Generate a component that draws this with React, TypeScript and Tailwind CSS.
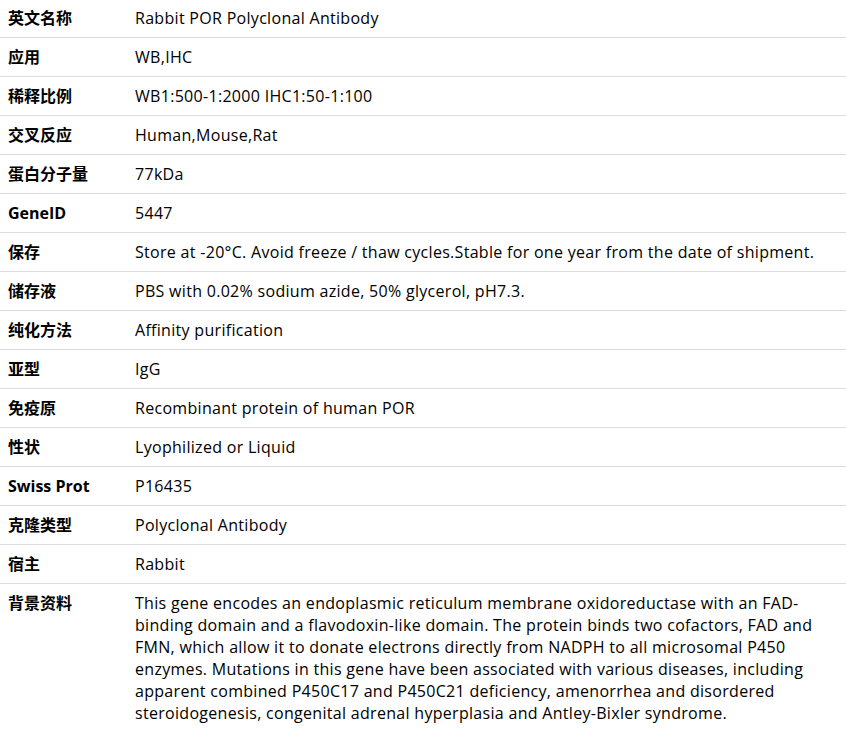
const rows: { label: string; value: string }[] = [
  { label: '英文名称', value: 'Rabbit POR Polyclonal Antibody' },
  { label: '应用', value: 'WB,IHC' },
  { label: '稀释比例', value: 'WB1:500-1:2000 IHC1:50-1:100' },
  { label: '交叉反应', value: 'Human,Mouse,Rat' },
  { label: '蛋白分子量', value: '77kDa' },
  { label: 'GeneID', value: '5447' },
  { label: '保存', value: 'Store at -20°C. Avoid freeze / thaw cycles.Stable for one year from the date of shipment.' },
  { label: '储存液', value: 'PBS with 0.02% sodium azide, 50% glycerol, pH7.3.' },
  { label: '纯化方法', value: 'Affinity purification' },
  { label: '亚型', value: 'IgG' },
  { label: '免疫原', value: 'Recombinant protein of human POR' },
  { label: '性状', value: 'Lyophilized or Liquid' },
  { label: 'Swiss Prot', value: 'P16435' },
  { label: '克隆类型', value: 'Polyclonal Antibody' },
  { label: '宿主', value: 'Rabbit' },
  {
    label: '背景资料',
    value:
      'This gene encodes an endoplasmic reticulum membrane oxidoreductase with an FAD-binding domain and a flavodoxin-like domain. The protein binds two cofactors, FAD and FMN, which allow it to donate electrons directly from NADPH to all microsomal P450 enzymes. Mutations in this gene have been associated with various diseases, including apparent combined P450C17 and P450C21 deficiency, amenorrhea and disordered steroidogenesis, congenital adrenal hyperplasia and Antley-Bixler syndrome.',
  },
];

export default function App() {
  return (
    <div className="w-[846px] bg-white text-black text-[16px] leading-[22px] font-['Open_Sans','Noto_Sans_CJK_SC',sans-serif]">
      {/* Spec table */}
      <div className="-mt-[2px]">
        {rows.map((r) => (
          <div key={r.label} className="grid grid-cols-[135px_1fr] border-t border-[#dddddd]">
            <div className="pl-2 py-2 font-bold">{r.label}</div>
            <div className="pr-2 py-2 tracking-[0.3px]">{r.value}</div>
          </div>
        ))}
      </div>
    </div>
  );
}
